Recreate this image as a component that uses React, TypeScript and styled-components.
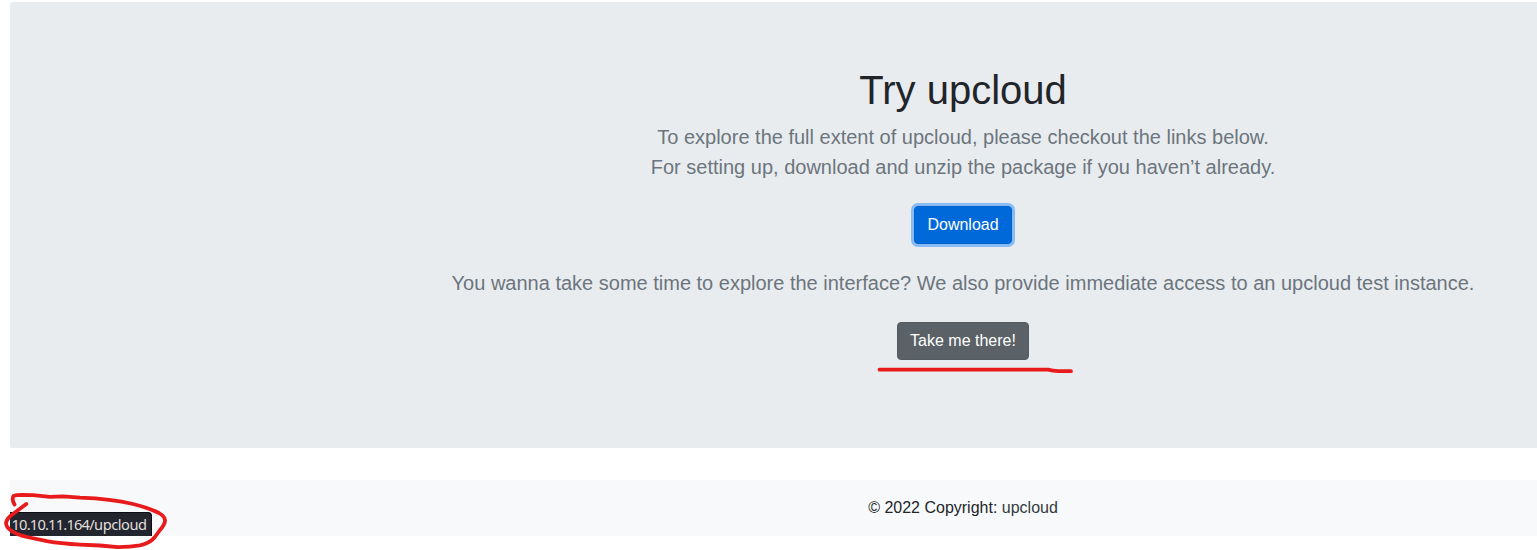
import React from "react";
import styled, { createGlobalStyle } from "styled-components";

const GlobalStyle = createGlobalStyle`
  *, *::before, *::after { box-sizing: border-box; }
  body {
    margin: 0;
    overflow: hidden;
    background: #fff;
    color: #212529;
    font: 400 16px/1.5 "Liberation Sans", Arial, sans-serif;
  }
`;

const Viewport = styled.div`
  position: relative;
  height: 550px;
  overflow: hidden;
  padding: 2px 0 0 10px;
`;

const Page = styled.div`
  width: 1906px;
  text-align: center;
`;

const Jumbotron = styled.section`
  padding: 64px 32px;
  margin-bottom: 32px;
  background: #e9ecef;
  border-radius: 2.5px;
`;

const Heading = styled.h1`
  margin: 0 0 8px;
  font-size: 40px;
  font-weight: 400;
  line-height: 1.2;
`;

const Lead = styled.p`
  margin: 0 0 16px;
  font-size: 20px;
  font-weight: 400;
  color: #6c757d;
`;

const Actions = styled.p`
  display: flex;
  justify-content: center;
  margin: 0 0 16px;
  padding: 8px 0;
`;

const Button = styled.a<{ $variant: "primary" | "secondary" }>`
  padding: 6px 12px;
  border: 1px solid ${(p) => (p.$variant === "primary" ? "#0062cc" : "#545b62")};
  border-radius: 4px;
  background: ${(p) => (p.$variant === "primary" ? "#0069d9" : "#5a6268")};
  box-shadow: ${(p) => (p.$variant === "primary" ? "0 0 0 3px #88bbf5" : "none")};
  color: #fff;
  line-height: 24px;
  cursor: pointer;
`;

const Footer = styled.footer`
  padding: 16px;
  background: #f8f9fa;
`;

const FooterLink = styled.a`
  color: #343a40;
`;

const StatusBar = styled.div`
  position: absolute;
  left: 10px;
  top: 512px;
  width: 142px;
  height: 24px;
  padding-left: 1.5px;
  border: solid #0c0c12;
  border-width: 1px 1px 0 0;
  border-radius: 0 4px 0 0;
  background: #23252f;
  color: #e0dfdb;
  font: 14.67px/23px "Noto Sans", sans-serif;
  white-space: nowrap;
`;

const Address = styled.span`
  letter-spacing: -0.8px;
`;

const Path = styled.span`
  letter-spacing: -0.48px;
`;

const Ink = styled.svg`
  position: absolute;
  left: 0;
  top: 0;
  pointer-events: none;
`;

export default function App() {
  return (
    <Viewport>
      <GlobalStyle />
      <Page>
        <Jumbotron>
          <Heading>Try upcloud</Heading>
          <Lead>
            To explore the full extent of upcloud, please checkout the links below.
            <br />
            For setting up, download and unzip the package if you haven’t already.
          </Lead>
          <Actions>
            <Button $variant="primary">Download</Button>
          </Actions>
          <Lead>
            You wanna take some time to explore the interface? We also provide immediate access to an upcloud test
            instance.
          </Lead>
          <Actions>
            <Button $variant="secondary">Take me there!</Button>
          </Actions>
        </Jumbotron>
        <Footer>
          © 2022 Copyright: <FooterLink>upcloud</FooterLink>
        </Footer>
      </Page>
      <StatusBar>
        <Address>10.10.11.164</Address>
        <Path>/upcloud</Path>
      </StatusBar>
      <Ink
        width="1537"
        height="550"
        viewBox="0 0 1537 550"
        fill="none"
        stroke="#e81a1c"
        strokeWidth="3.8"
        strokeLinecap="round"
        strokeLinejoin="round"
      >
        <path d="M879.5 369.7H1048Q1053 370.9 1058 371.2H1071" />
        <path d="M14.5 504.5Q11.5 499.5 13.5 496Q16 494.8 22 494.8L33 495.1L50 496.8L63 496.3L80 497.7C100 498.5 116 500 133 504C146 507 153 510 159 513Q165.5 517 165 521Q164.5 525 160 530L154.5 537.5Q150 543 140 545.3Q130 547 118 547.2L100 545.5L80 544.7C67 544 57 543 47 541.2L27 537Q16 534.5 11 530.5Q6 527 6 523Q6.5 519 11 515.5L26.3 504" />
      </Ink>
    </Viewport>
  );
}
